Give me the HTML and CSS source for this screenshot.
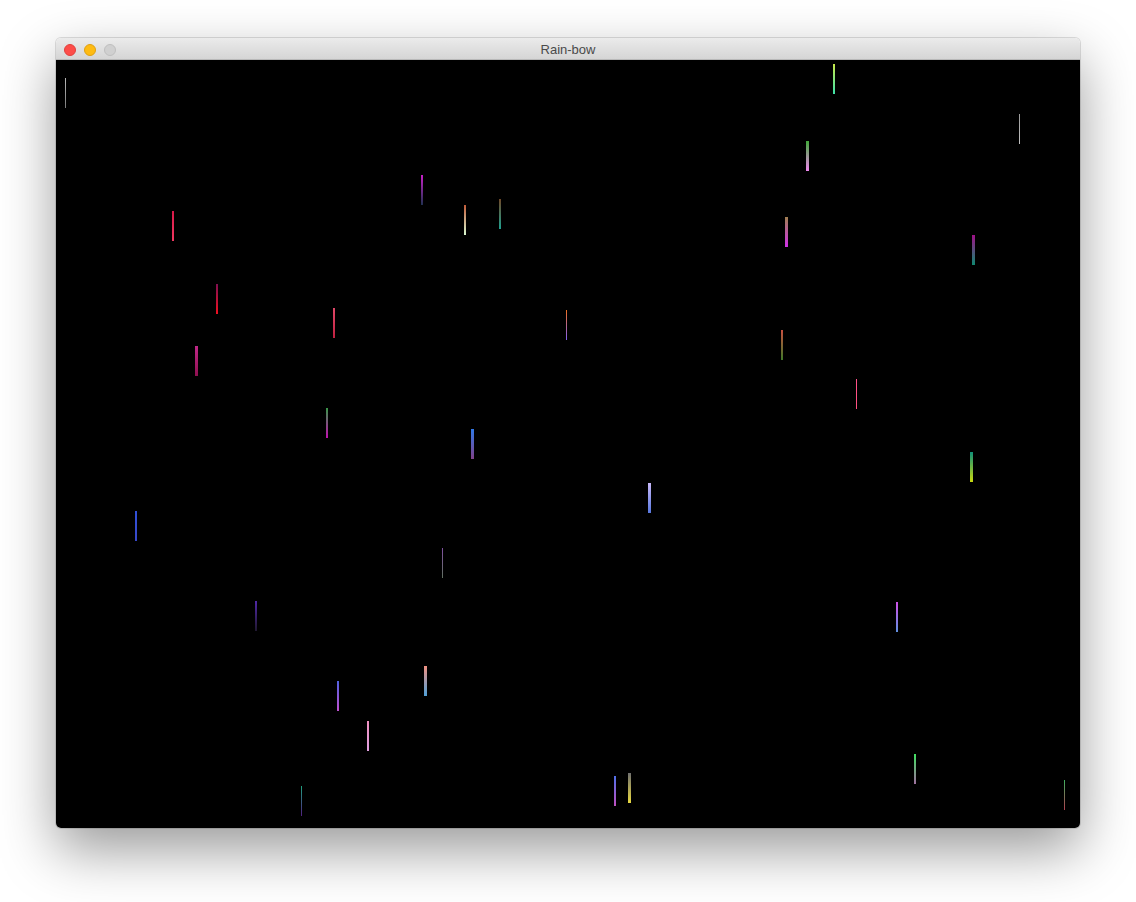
FILE: index.html
```html
<!DOCTYPE html>
<html>
<head>
<meta charset="utf-8">
<title>Rain-bow</title>
<link rel="stylesheet" href="styles.css">
</head>
<body>
<div class="desktop">
  <div class="window">
    <div class="titlebar">
      <div class="lights">
        <span class="light close"></span>
        <span class="light min"></span>
        <span class="light zoom"></span>
      </div>
      <div class="title">Rain-bow</div>
      <div></div>
    </div>
    <div class="canvas">
      <i class="drop" style="left:9px;top:18px;width:1px;background:linear-gradient(#b8b8b8,#7c7c7c)"></i>
      <i class="drop" style="left:777px;top:4px;width:2px;background:linear-gradient(#c8e84a,#3ee0a8)"></i>
      <i class="drop" style="left:963px;top:54px;width:1px;background:linear-gradient(#9a9a9a,#c0c0c0)"></i>
      <i class="drop" style="left:750px;top:81px;width:3px;background:linear-gradient(#40a838,#f088f0)"></i>
      <i class="drop" style="left:365px;top:115px;width:2px;background:linear-gradient(#c820c8,#203050)"></i>
      <i class="drop" style="left:408px;top:145px;width:2px;background:linear-gradient(#c05a38,#d8f8d0)"></i>
      <i class="drop" style="left:443px;top:139px;width:2px;background:linear-gradient(#704828,#20a090)"></i>
      <i class="drop" style="left:116px;top:151px;width:2px;background:linear-gradient(#d81848,#f03860)"></i>
      <i class="drop" style="left:729px;top:157px;width:3px;background:linear-gradient(#a08050,#d030e8)"></i>
      <i class="drop" style="left:916px;top:175px;width:3px;background:linear-gradient(#a01088,#108870)"></i>
      <i class="drop" style="left:160px;top:224px;width:2px;background:linear-gradient(#801050,#f01020)"></i>
      <i class="drop" style="left:277px;top:248px;width:2px;background:linear-gradient(#e04868,#c02040)"></i>
      <i class="drop" style="left:510px;top:250px;width:1px;background:linear-gradient(#f07020,#8060f0)"></i>
      <i class="drop" style="left:139px;top:286px;width:3px;background:linear-gradient(#c02888,#901050)"></i>
      <i class="drop" style="left:725px;top:270px;width:2px;background:linear-gradient(#c85040,#407828)"></i>
      <i class="drop" style="left:800px;top:319px;width:1px;background:linear-gradient(#ff5088,#ff5080)"></i>
      <i class="drop" style="left:270px;top:348px;width:2px;background:linear-gradient(#389848,#c010b0)"></i>
      <i class="drop" style="left:415px;top:369px;width:3px;background:linear-gradient(#3078e8,#804088)"></i>
      <i class="drop" style="left:914px;top:392px;width:3px;background:linear-gradient(#109078,#c8d810)"></i>
      <i class="drop" style="left:592px;top:423px;width:3px;background:linear-gradient(#c8b8f8,#5878e0)"></i>
      <i class="drop" style="left:79px;top:451px;width:2px;background:linear-gradient(#3050d8,#3848c8)"></i>
      <i class="drop" style="left:386px;top:488px;width:1px;background:linear-gradient(#8050a0,#607060)"></i>
      <i class="drop" style="left:199px;top:541px;width:2px;background:linear-gradient(#5028a8,#201830)"></i>
      <i class="drop" style="left:840px;top:542px;width:2px;background:linear-gradient(#d050e8,#6090e0)"></i>
      <i class="drop" style="left:368px;top:606px;width:3px;background:linear-gradient(#f09080,#50a0d8)"></i>
      <i class="drop" style="left:281px;top:621px;width:2px;background:linear-gradient(#5060e0,#c050d0)"></i>
      <i class="drop" style="left:311px;top:661px;width:2px;background:linear-gradient(#f090c0,#e0a0e0)"></i>
      <i class="drop" style="left:858px;top:694px;width:2px;background:linear-gradient(#40e060,#a070a0)"></i>
      <i class="drop" style="left:558px;top:716px;width:2px;background:linear-gradient(#5070e8,#c050c0)"></i>
      <i class="drop" style="left:572px;top:713px;width:3px;background:linear-gradient(#707070,#e8d840)"></i>
      <i class="drop" style="left:245px;top:726px;width:1px;background:linear-gradient(#20a080,#502080)"></i>
      <i class="drop" style="left:1008px;top:720px;width:1px;background:linear-gradient(#40b060,#b04050)"></i>
    </div>
  </div>
</div>
</body>
</html>
```

FILE: styles.css
```css
html, body {
  margin: 0;
  padding: 0;
  background: #ffffff;
}

.desktop {
  box-sizing: border-box;
  min-height: 100vh;
  padding: 38px 56px 74px;
  display: flex;
  justify-content: flex-start;
  align-items: flex-start;
}

.window {
  width: 1024px;
  border-radius: 5px;
  overflow: hidden;
  box-shadow: 0 22px 55px rgba(0, 0, 0, 0.4), 0 0 0 1px rgba(0, 0, 0, 0.12);
}

.titlebar {
  height: 22px;
  box-sizing: border-box;
  display: grid;
  grid-template-columns: 1fr auto 1fr;
  align-items: center;
  background: linear-gradient(#ebebeb, #d5d5d5);
  border-bottom: 1px solid #b8b8b8;
}

.lights {
  display: flex;
  gap: 8px;
  padding-left: 8px;
  align-items: center;
}

.light {
  width: 12px;
  height: 12px;
  border-radius: 50%;
  box-sizing: border-box;
}

.light.close {
  background: #fd4d49;
  border: 1px solid #e2403c;
}

.light.min {
  background: #febb12;
  border: 1px solid #e0a010;
}

.light.zoom {
  background: #d0d0d0;
  border: 1px solid #bfbfbf;
}

.title {
  font-family: "Liberation Sans", Arial, sans-serif;
  font-size: 13px;
  color: #4a4a4a;
  line-height: 22px;
  padding-top: 1px;
}

.canvas {
  position: relative;
  height: 768px;
  background: #000000;
}

.drop {
  position: absolute;
  display: block;
  height: 30px;
}
```
